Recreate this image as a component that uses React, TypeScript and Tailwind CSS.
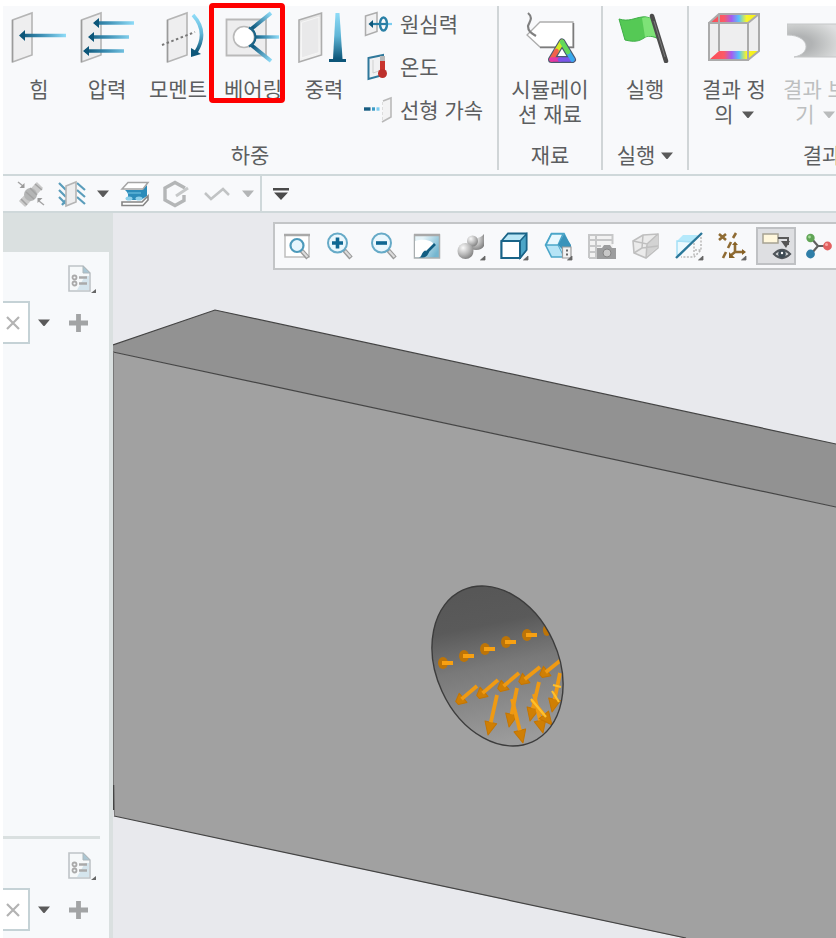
import type { ReactNode } from "react";

const labelText = "text-[21px] leading-[25px] text-[#5c5e60]";

function Caret({ className = "text-[#5a5a5a]" }: { className?: string }) {
  return (
    <svg viewBox="0 0 12 7" className={`h-[7px] w-3 shrink-0 ${className}`} aria-hidden="true">
      <path d="M0 0.5H12L6.5 7H5.5Z" fill="currentColor" />
    </svg>
  );
}

function Corner() {
  return <path d="M28 24V28H23.5Z" fill="#666" stroke="#666" strokeWidth="0.8" />;
}

/* Ribbon icons, 56 x 54 */

function BigIcon({ children }: { children: ReactNode }) {
  return (
    <svg viewBox="0 0 56 54" className="h-[54px] w-[56px] shrink-0" fill="none" aria-hidden="true">
      <defs>
        <linearGradient id="shaft" x1="0" x2="1">
          <stop offset="0" stopColor="#0d5679" />
          <stop offset="0.45" stopColor="#3d8fb4" />
          <stop offset="1" stopColor="#8fdcf8" />
        </linearGradient>
        <linearGradient id="down" x1="0" x2="0" y1="0" y2="1">
          <stop offset="0" stopColor="#8fdcf8" />
          <stop offset="0.5" stopColor="#5fb5d6" />
          <stop offset="1" stopColor="#0d5679" />
        </linearGradient>
        <linearGradient id="plate" x1="0" x2="0" y1="0" y2="1">
          <stop offset="0" stopColor="#e3e3e3" />
          <stop offset="1" stopColor="#f4f4f4" />
        </linearGradient>
      </defs>
      {children}
    </svg>
  );
}

function ForceIcon() {
  return (
    <BigIcon>
      <path d="M1.5 11L21 4V46L1.5 53Z" fill="#eeeeef" stroke="#b5b5b5" strokeWidth="1.6" />
      <path d="M1.5 11V53" stroke="#9b9b9b" strokeWidth="1.4" />
      <path d="M10 24.8H55V28.2H10Z" fill="url(#shaft)" />
      <path d="M8 26.5L14 21V32Z" fill="#0d5679" />
    </BigIcon>
  );
}

function PressureIcon() {
  return (
    <BigIcon>
      <path d="M2.500 11L22 4V46L2.500 53Z" fill="#eeeeef" stroke="#b5b5b5" strokeWidth="1.6" />
      <path d="M2.500 11V53" stroke="#9b9b9b" strokeWidth="1.4" />
      <path d="M16 12.300H55V15.700H16ZM11 26.300H50V29.700H11ZM6 40.300H45V43.700H6Z" fill="url(#shaft)" />
      <path d="M14 14L20 9V19ZM9 28L15 23V33ZM4 42L10 37V47Z" fill="#0d5679" />
    </BigIcon>
  );
}

function MomentIcon() {
  return (
    <BigIcon>
      <path d="M17.500 11L37 4V46L17.500 53Z" fill="#eeeeef" stroke="#b5b5b5" strokeWidth="1.6" />
      <path d="M17.500 11V53" stroke="#9b9b9b" strokeWidth="1.4" />
      <path d="M12 36L45 23" stroke="#777" strokeWidth="1.900" strokeDasharray="2.500 2.500" />
      <path d="M43 6C54 18 54 30 46 43" stroke="url(#down)" strokeWidth="3.600" />
      <path d="M41 39V48L51 45Z" fill="#0d5679" />
    </BigIcon>
  );
}

function BearingIcon() {
  return (
    <BigIcon>
      <defs>
        <linearGradient id="spokeUp" gradientUnits="userSpaceOnUse" x1="24" y1="22" x2="46" y2="4">
          <stop offset="0.2" stopColor="#125c81" />
          <stop offset="1" stopColor="#8fdcf8" />
        </linearGradient>
        <linearGradient id="spokeDown" gradientUnits="userSpaceOnUse" x1="24" y1="34" x2="46" y2="52">
          <stop offset="0.2" stopColor="#125c81" />
          <stop offset="1" stopColor="#8fdcf8" />
        </linearGradient>
      </defs>
      <path d="M1.500 10.500H41V46.500H1.500Z" fill="#ededee" stroke="#b9b9b9" strokeWidth="1.8" />
      <path d="M25 21L46 4" stroke="url(#spokeUp)" strokeWidth="3.800" />
      <path d="M25 35L46 52" stroke="url(#spokeDown)" strokeWidth="3.800" />
      <path d="M28 26.300H54V29.700H28Z" fill="url(#shaft)" />
      <circle cx="19" cy="28" r="10.500" fill="#fff" stroke="#b9b9b9" strokeWidth="1.6" />
      <path d="M24 18.500Q30.500 22 30.500 28T24 37.500" stroke="#1c6588" strokeWidth="2.200" />
    </BigIcon>
  );
}

function GravityIcon() {
  return (
    <BigIcon>
      <path d="M3 11L25.500 4V46L3 53Z" fill="url(#plate)" stroke="#adadad" strokeWidth="1.600" />
      <path d="M5.500 13.500L23 8V43.500L5.500 49Z" fill="#e9e9ea" stroke="#f6f6f6" />
      <path d="M39.500 4H43.500L46.500 50H37Z" fill="url(#down)" />
      <path d="M33 50H50V53H33Z" fill="#0d5679" />
    </BigIcon>
  );
}

function MaterialIcon() {
  return (
    <BigIcon>
      <path d="M18 13H51V38H18L5 26Z" fill="#fff" stroke="#adadad" strokeWidth="1.300" />
      <path d="M51.500 14V38.500H18" stroke="#7c7c7c" strokeWidth="1.500" />
      <path d="M6 4C12 9 7 13 6 17C6 22 9 24 14 27" stroke="#808080" strokeWidth="2.200" />
      <path d="M40 33L50.500 50.500H29.500Z" fill="#fff" stroke="#4a5a70" strokeWidth="7" strokeLinejoin="round" />
      <g strokeWidth="4.600" strokeLinecap="round">
        <path d="M40 33L34.500 42" stroke="#d4ec25" />
        <path d="M34.500 42L29.500 50.500" stroke="#f2604a" />
        <path d="M29.500 50.500H38" stroke="#e437a7" />
        <path d="M38 50.500H50.500" stroke="#7a57ea" />
        <path d="M50.500 50.500L46 43" stroke="#38a9ed" />
        <path d="M46 43L40 33" stroke="#62d95a" />
      </g>
    </BigIcon>
  );
}

function FlagIcon() {
  return (
    <BigIcon>
      <path d="M2 10C12 13 17 9 25 8C29 7 32 9 36 10L42 30C35 27 31 26 27 29C20 34 13 32 8 31Z" fill="#55c955" stroke="#3fae47" strokeWidth="1" />
      <path d="M25 9C29 7 33 9 36 10L42 29C35 26 31 27 28 28Z" fill="#7ee277" />
      <path d="M35 7L49 52" stroke="#4c4c4c" strokeWidth="4.500" strokeLinecap="round" />
      <path d="M37 12L48 48" stroke="#7b7b7b" strokeWidth="1" />
    </BigIcon>
  );
}

function ResultCubeIcon() {
  return (
    <BigIcon>
      <defs>
        <linearGradient id="spectrum" x1="0" x2="1">
          <stop offset="0" stopColor="#fb4b55" />
          <stop offset="0.3" stopColor="#fb5a66" />
          <stop offset="0.45" stopColor="#a55cf0" />
          <stop offset="0.6" stopColor="#55c4fb" />
          <stop offset="0.75" stopColor="#f8f52a" />
          <stop offset="1" stopColor="#f6ee10" />
        </linearGradient>
      </defs>
      <path d="M3 14L13 5H53V43L42 51H3Z" fill="#eeeeef" />
      <path d="M3 14L13 5H53L42 14Z" fill="url(#spectrum)" />
      <path d="M3 51L13 42H53L42 51Z" fill="url(#spectrum)" />
      <path d="M13 5V42M3 14H42V51H3ZM3 14L13 5H53V42L42 51M42 14L53 5" stroke="#ababab" strokeWidth="2" />
    </BigIcon>
  );
}

function ResultViewIcon() {
  return (
    <BigIcon>
      <defs>
        <radialGradient id="stress" cx="0.200" cy="0.600" r="0.800">
          <stop offset="0.300" stopColor="#b1b3b4" />
          <stop offset="0.700" stopColor="#cbcdcd" />
          <stop offset="1" stopColor="#dedfe0" />
        </radialGradient>
      </defs>
      <path d="M0 15H56V48H7C25 45 23 26 0 26Z" fill="url(#stress)" stroke="#c5c7c8" />
    </BigIcon>
  );
}

/* Small icons, 28 x 28 */

function Icon28({ children, className = "" }: { children: ReactNode; className?: string }) {
  return (
    <svg viewBox="0 0 28 28" className={`size-7 shrink-0 overflow-visible ${className}`} fill="none" aria-hidden="true">
      {children}
    </svg>
  );
}

function CentrifugalIcon() {
  return (
    <Icon28>
      <path d="M1.500 6L13 2.500V21.500L1.500 25.500Z" fill="#f1f1f2" stroke="#adadad" strokeWidth="1.500" />
      <path d="M6 14H24" stroke="#287da4" strokeWidth="2.200" />
      <path d="M24 14H28" stroke="#7bcdf0" strokeWidth="2.200" />
      <path d="M4.500 14L9 10V18Z" fill="#0d5679" />
      <ellipse cx="19.500" cy="14" rx="3.500" ry="6.500" stroke="#2a80a6" strokeWidth="2.400" />
    </Icon28>
  );
}

function TemperatureIcon() {
  return (
    <Icon28>
      <path d="M4.500 5L19 2V22L4.500 26Z" fill="#f1f1f2" stroke="#2f789b" strokeWidth="2" />
      <path d="M9 7V20L15 18" stroke="#cfcfcf" />
      <path d="M16 3H21V17H16Z" fill="#b9b9b9" />
      <path d="M16 8H21V18H16Z" fill="#c9352e" />
      <circle cx="18.500" cy="20.500" r="4.500" fill="#bd302c" />
    </Icon28>
  );
}

function LinearAccelIcon() {
  return (
    <Icon28>
      <path d="M0 13H6.500" stroke="#175d82" strokeWidth="3.400" />
      <path d="M8 13H11" stroke="#3d9cc6" strokeWidth="3.400" />
      <path d="M12.500 13H15.500" stroke="#7bcdf0" strokeWidth="3.400" />
      <path d="M19 5L27 2V21L18 26" fill="#f3f3f4" stroke="#b9b9b9" strokeWidth="1.600" />
      <path d="M18.500 6V25" stroke="#ddd" strokeDasharray="3 2" />
    </Icon28>
  );
}

/* Canvas toolbar icons */

const handle = <path d="M18 18L25 26" stroke="#9a9a9a" strokeWidth="4.500" />;
const handleCore = <path d="M19 19L24.500 25" stroke="#dcdcdc" strokeWidth="2" />;

function RefitIcon() {
  return (
    <Icon28>
      <path d="M2 3H26V25H2Z" fill="#fff" stroke="#bfbfbf" strokeWidth="1.500" />
      <path d="M1 3H27" stroke="#a9a9a9" strokeWidth="2.500" />
      {handle}
      {handleCore}
      <circle cx="14" cy="13.500" r="6.500" fill="#e7f6fd" stroke="#4d9abb" strokeWidth="2.200" />
    </Icon28>
  );
}

function ZoomIcon({ plus }: { plus?: boolean }) {
  return (
    <Icon28>
      {handle}
      {handleCore}
      <circle cx="11.500" cy="11" r="9.500" fill="#eaf7fd" stroke="#66aac7" strokeWidth="2" />
      <path d={plus ? "M6 11H17M11.500 5.500V16.500" : "M6 11H17"} stroke="#0f6792" strokeWidth="3.600" />
    </Icon28>
  );
}

function RepaintIcon() {
  return (
    <Icon28>
      <defs>
        <linearGradient id="canvasFill" x1="0" x2="1" y1="0" y2="0.600">
          <stop offset="0.300" stopColor="#e6f4f9" />
          <stop offset="1" stopColor="#74b6d0" />
        </linearGradient>
      </defs>
      <path d="M1.500 3H26.500V26H1.500Z" fill="url(#canvasFill)" stroke="#a9aeb0" strokeWidth="1.500" />
      <path d="M2 9C12 6 20 9 21 13L8 25H2Z" fill="#fff" />
      <path d="M1 3H27" stroke="#a9a9a9" strokeWidth="2.500" />
      <path d="M22 12L14 20" stroke="#115d82" strokeWidth="2.600" />
      <path d="M6 25.500C9 25 8 21 12 18.500L16 20C15 23 13 25.500 10 25.500Z" fill="#115d82" />
    </Icon28>
  );
}

function RenderIcon() {
  return (
    <Icon28>
      <defs>
        <radialGradient id="ball" cx="0.350" cy="0.300" r="0.800">
          <stop offset="0" stopColor="#fafafa" />
          <stop offset="0.500" stopColor="#bdbdbd" />
          <stop offset="1" stopColor="#777" />
        </radialGradient>
      </defs>
      <path d="M15 6C19 7 24 6 27 2V14C25 18 19 19 14 17Z" fill="url(#ball)" />
      <circle cx="15.500" cy="9" r="5.500" fill="url(#ball)" />
      <circle cx="8.500" cy="19" r="8" fill="url(#ball)" />
      <Corner />
    </Icon28>
  );
}

function CubeIcon() {
  return (
    <Icon28>
      <path d="M1.500 9L8 1.500H26.500V18L20 26H1.500Z" fill="#b9e6f6" stroke="#1a6488" strokeWidth="1.800" />
      <path d="M20 9L26.500 2V18L20 26Z" fill="#4ca5c7" stroke="#1a6488" strokeWidth="1.500" />
      <path d="M1.500 9H20V26H1.500Z" fill="#fff" stroke="#1a6488" strokeWidth="2" />
      <Corner />
    </Icon28>
  );
}

function SavedViewIcon() {
  return (
    <Icon28>
      <path d="M7.500 1.500H20L26 14L21 25H7.500L1.500 13Z" fill="#b5e4f6" stroke="#4ba6c9" strokeWidth="1.600" />
      <path d="M7.500 2H19L14 13H2Z" fill="#e8f8fe" stroke="#4ba6c9" strokeWidth="1.500" />
      <path d="M20 2L27 13V17H18L14 13Z" fill="#3a93ba" />
      <path d="M14 13L20 25" stroke="#4ba6c9" />
      <path d="M18.500 15H27V26H18.500Z" fill="#f2f2f2" stroke="#9b9b9b" strokeWidth="1.200" />
      <path d="M22 18.500H24M22 22.500H24" stroke="#666" strokeWidth="2" />
      <Corner />
    </Icon28>
  );
}

function ViewManagerIcon() {
  return (
    <Icon28>
      <path d="M1 2H25V26H1Z" fill="#f2f2f2" />
      <path d="M0 3H25M1 8H25M1 14H13M1 20H10M1 26H9M1 2V26M8 2V26M24.500 2V12" stroke="#c6c7c8" strokeWidth="2" />
      <path d="M9 16H14L16 13H22L24 16H28V27H9Z" fill="#9c9d9e" />
      <circle cx="19" cy="21" r="4" fill="#c8c8c8" stroke="#858585" />
    </Icon28>
  );
}

function PerspectiveIcon() {
  return (
    <Icon28>
      <path d="M2 9L12 3L27 2V16L15 26L3 21Z" fill="#ebebeb" stroke="#bfbfbf" strokeWidth="1.600" />
      <path d="M16 12L27 3V15L15 25Z" fill="#d3d3d3" />
      <path d="M2 9L16 12L27 2M16 12L15 26M12 3L11 16L3 21M11 16L27 14" stroke="#bfbfbf" strokeWidth="1.500" />
    </Icon28>
  );
}

function SectionIcon() {
  return (
    <Icon28>
      <path d="M2 9L8 3H23L17 10H2Z" fill="#b5e9fb" />
      <path d="M2 9V23H5L17 10Z" fill="#ebf9fe" stroke="#a5e0f6" strokeWidth="1.500" />
      <path d="M26 5V18L19 25H6M19 11V25M20 18H26" stroke="#b9b9b9" strokeWidth="1.500" strokeDasharray="2 1.500" />
      <path d="M1 26L27 1" stroke="#2a7799" strokeWidth="2.400" />
      <Corner />
    </Icon28>
  );
}

function DatumIcon() {
  return (
    <Icon28>
      <path d="M1 2L8 8M8 2L1 8M18 1L15 6M13 10L10 16M8 20L5 26M17 12V20M17 20H26M17 20L12 24" stroke="#8f6b33" strokeWidth="2.600" />
      <path d="M14 13H20L17 9.500ZM24 17V23L28 20ZM11 20V26H17Z" fill="#876125" />
      <Corner />
    </Icon28>
  );
}

function AnnotationIcon() {
  return (
    <Icon28>
      <path d="M1 2H16V11H1Z" fill="#fff7dc" stroke="#a7a292" strokeWidth="1.500" />
      <path d="M16 6H26V13" stroke="#5a5a5a" strokeWidth="2" />
      <path d="M19 9H28L24 16Z" fill="#555" />
      <path d="M12 22Q20 14 28 22Q20 30 12 22Z" fill="#cfd2d4" stroke="#50555a" strokeWidth="2.200" />
      <circle cx="20" cy="22" r="3.800" fill="#3e4b54" />
      <circle cx="20" cy="21" r="1.200" fill="#fff" />
    </Icon28>
  );
}

function SpinCenterIcon() {
  return (
    <Icon28>
      <path d="M6 6L13 14L6 22M13 14H22" stroke="#606060" strokeWidth="2.200" />
      <circle cx="5.500" cy="6" r="4.200" fill="#61a556" />
      <circle cx="5.500" cy="22" r="4.400" fill="#2f7ea8" />
      <circle cx="22.500" cy="14" r="4.400" fill="#e26161" />
      <circle cx="4.500" cy="5" r="1.400" fill="#a7dc9c" />
      <circle cx="21.500" cy="12.500" r="1.500" fill="#f9a9a5" />
    </Icon28>
  );
}

/* Quick access icons */

function BoltIcon() {
  return (
    <Icon28>
      <path d="M5 24L23 5" stroke="#cacaca" strokeWidth="8.500" />
      <circle cx="13.500" cy="14.500" r="6.500" fill="#b4b5b5" />
      <path d="M4 19L10 25M18 4L25 10M9 12L17 19M13 8L20 15" stroke="#a3a3a3" strokeWidth="1.600" />
      <path d="M1 2L6 6M27 25L22 21" stroke="#a5a5a5" strokeWidth="1.500" />
      <path d="M7.500 3V8H2.500ZM20.500 23V18H25.500Z" fill="#9a9a9a" />
    </Icon28>
  );
}

function ConstraintIcon() {
  return (
    <Icon28>
      <path d="M1 3L8 10M1 10L8 17M1 17L8 24M19 3L27 10M19 10L27 17M19 17L27 24M4 25L8 20" stroke="#5a9dbb" strokeWidth="2.200" />
      <path d="M8 6L18 2V22L8 26Z" fill="#ededee" stroke="#b5b5b5" strokeWidth="1.600" />
    </Icon28>
  );
}

function ContactIcon() {
  return (
    <Icon28>
      <path d="M4 10H21L26 5V16L20 20H5C8 17 8 13 4 10Z" fill="#2c8cba" />
      <path d="M1 9L7 2.500H27L22 9Z" fill="#fff" stroke="#a5a5a5" strokeWidth="1.500" />
      <path d="M7 13H20" stroke="#56aed3" strokeWidth="1.800" />
      <ellipse cx="8" cy="18.500" rx="3.500" ry="2" fill="#8ed0ea" />
      <ellipse cx="18" cy="18.500" rx="3.500" ry="2" fill="#8ed0ea" />
      <path d="M1 25.500V22H21L27 16V20L22 25.500Z" fill="#fff" stroke="#858585" strokeWidth="1.600" />
    </Icon28>
  );
}

function HexIcon() {
  return (
    <Icon28>
      <path d="M23 8L13 2.500L3 8V20L13 25.500L22 20.500V15" stroke="#b4b6b7" strokeWidth="3.400" />
      <path d="M14 16L26 8" stroke="#c6c8c9" strokeWidth="3" />
    </Icon28>
  );
}

function ZigzagIcon() {
  return (
    <Icon28>
      <path d="M2 13L8 19L20 9L26 15" stroke="#c1c3c4" strokeWidth="2.500" />
    </Icon28>
  );
}

/* Ribbon parts */

function RibbonButton({
  icon,
  children,
  className = "",
  disabled,
}: {
  icon: ReactNode;
  children: ReactNode;
  className?: string;
  disabled?: boolean;
}) {
  return (
    <button
      type="button"
      disabled={disabled}
      className={`relative flex shrink-0 flex-col items-center gap-[14px] pt-[3px] whitespace-nowrap disabled:[&_span]:text-[#bdbfc0] ${className}`}
    >
      {icon}
      <span className={labelText}>{children}</span>
    </button>
  );
}

function SmallButton({ icon, children }: { icon: ReactNode; children: ReactNode }) {
  return (
    <button type="button" className="flex h-9 items-center gap-2 whitespace-nowrap">
      {icon}
      <span className={labelText}>{children}</span>
    </button>
  );
}

function Group({ title, children, className = "" }: { title: ReactNode; children: ReactNode; className?: string }) {
  return (
    <section className={`flex h-[164px] shrink-0 flex-col justify-between ${className}`}>
      <div className="flex">{children}</div>
      <h2 className={`flex items-center justify-center gap-[6px] pb-[2px] whitespace-nowrap ${labelText}`}>{title}</h2>
    </section>
  );
}

const divider = "border-r-2 border-[#d0d5d7]";

function Ribbon() {
  return (
    <header className="flex h-[170px] border-b-2 border-[#cfd8da] bg-[#f8f9fb]">
      <Group title="하중" className={`w-[496px] ${divider}`}>
        <RibbonButton icon={<ForceIcon />} className="w-[72px]">힘</RibbonButton>
        <RibbonButton icon={<PressureIcon />} className="w-16">압력</RibbonButton>
        <RibbonButton icon={<MomentIcon />} className="w-[78px]">모멘트</RibbonButton>
        <RibbonButton icon={<BearingIcon />} className="w-[72px]">
          베어링
          <i className="absolute -top-[3px] -left-2 h-[100px] w-[76px] rounded-sm border-[5px] border-[#fe0000]" />
        </RibbonButton>
        <RibbonButton icon={<GravityIcon />} className="w-[70px]">중력</RibbonButton>
        <div className="flex flex-col gap-[7px] pl-[5px]">
          <SmallButton icon={<CentrifugalIcon />}>원심력</SmallButton>
          <SmallButton icon={<TemperatureIcon />}>온도</SmallButton>
          <SmallButton icon={<LinearAccelIcon />}>선형 가속</SmallButton>
        </div>
      </Group>
      <Group title="재료" className={`w-[104px] ${divider}`}>
        <RibbonButton icon={<MaterialIcon />} className="w-full">
          시뮬레이
          <br />션 재료
        </RibbonButton>
      </Group>
      <Group title={<>실행 <Caret /></>} className={`w-[86px] ${divider}`}>
        <RibbonButton icon={<FlagIcon />} className="w-full">실행</RibbonButton>
      </Group>
      <Group title="결과" className="w-[266px]">
        <RibbonButton icon={<ResultCubeIcon />} className="w-[90px]">
          결과 정
          <br />
          <span className="inline-flex items-center gap-2">의 <Caret /></span>
        </RibbonButton>
        <RibbonButton icon={<ResultViewIcon />} className="w-[72px]" disabled>
          결과 보
          <br />
          <span className="inline-flex items-center gap-2">기 <Caret className="text-[#b9bbbc]" /></span>
        </RibbonButton>
      </Group>
    </header>
  );
}

function QuickBar() {
  return (
    <nav aria-label="빠른 실행" className="flex h-[37px] items-center border-b-2 border-[#cfd8da] bg-[#f8f9fb]">
      <button type="button" aria-label="볼트" className="ml-[14px]"><BoltIcon /></button>
      <button type="button" aria-label="구속" className="ml-[13px] flex items-center gap-[11px]"><ConstraintIcon /><Caret /></button>
      <button type="button" aria-label="접촉" className="ml-3"><ContactIcon /></button>
      <button type="button" aria-label="형상" className="ml-[13px]"><HexIcon /></button>
      <button type="button" aria-label="곡선" className="ml-[13px] flex items-center gap-[11px]"><ZigzagIcon /><Caret className="text-[#b3b5b6]" /></button>
      <button type="button" aria-label="사용자 정의" className="ml-[6px] flex h-full items-center border-l-2 border-[#cfd8da] pl-[11px]">
        <svg viewBox="0 0 16 12" className="h-3 w-4" aria-hidden="true">
          <path d="M0 0H16V2.500H0ZM1 4.500H15L8 12Z" fill="#4a4a4a" />
        </svg>
      </button>
    </nav>
  );
}

function TreeTools({ id }: { id: string }) {
  return (
    <div className="flex flex-col gap-[6px] pt-3">
      <button type="button" aria-label="설정" className="ml-[65px] w-[30px]">
        <svg viewBox="0 0 30 31" className="h-[31px] w-[30px]" fill="none" aria-hidden="true">
          <path d="M1 2H15L22 9V27H1Z" fill="#f6f9fa" stroke="#bfc4c7" strokeWidth="1.600" />
          <path d="M15 2V9H22Z" fill="#aac6d3" stroke="#aeb8bc" />
          <path d="M17 12H21V26H9Z" fill="#d5e5ed" />
          <path d="M11 13.500H19M11 19.500H19" stroke="#aaa" strokeWidth="2.400" />
          <circle cx="6.500" cy="13.500" r="2" stroke="#aaa" strokeWidth="1.800" />
          <circle cx="6.500" cy="19.500" r="2" stroke="#aaa" strokeWidth="1.800" />
          <path d="M28 25V29H23Z" fill="#666" />
        </svg>
      </button>
      <div className="flex items-center">
        <div className="flex h-[43px] w-[27px] items-center border-2 border-l-0 border-[#c5d2d6] bg-white pr-2">
          <input id={id} aria-label="검색" className="w-0 min-w-0 flex-1 outline-none" />
          <button type="button" aria-label="지우기">
            <svg viewBox="0 0 14 14" className="size-[14px]" aria-hidden="true">
              <path d="M1 1L13 13M13 1L1 13" stroke="#b3b3b3" strokeWidth="2.200" />
            </svg>
          </button>
        </div>
        <button type="button" aria-label="옵션" className="ml-2"><Caret /></button>
        <button type="button" aria-label="추가" className="ml-[18px]">
          <svg viewBox="0 0 20 20" className="size-5" aria-hidden="true">
            <path d="M10.500 1V19M1 10H20" stroke="#a2a4a5" strokeWidth="4.800" />
          </svg>
        </button>
      </div>
    </div>
  );
}

function Sidebar() {
  return (
    <aside className="flex w-[110px] shrink-0 flex-col border-r-4 border-[#dae0e0] bg-[#f7f9fb]">
      <div className="h-[39px] bg-[#dae0e0]" />
      <div className="flex-1"><TreeTools id="model-filter" /></div>
      <div className="pb-[7px]">
        <div className="mr-[9px] h-[3px] bg-[#dae0e0]" />
        <TreeTools id="layer-filter" />
      </div>
    </aside>
  );
}

/* 3D model */

type Arrow = [number, number, number, number];

const stubs: [number, number][] = [[443, 663], [464, 656], [485, 649], [506, 642], [527, 635]];

const obliqueArrows: Arrow[] = [
  [477, 686, 457, 703],
  [498, 680, 478, 697],
  [519, 673, 499, 690],
  [540, 667, 520, 683],
  [561, 660, 541, 676],
];

const radialArrows: Arrow[] = [
  [497, 695, 488, 735],
  [517, 688, 509, 727],
  [512, 699, 523, 743],
  [539, 682, 530, 721],
  [534, 694, 543, 733],
  [560, 673, 552, 712],
  [532, 700, 552, 725],
];

function LoadArrow({ points: [x1, y1, x2, y2], blunt }: { points: Arrow; blunt?: boolean }) {
  const length = Math.hypot(x2 - x1, y2 - y1);
  const angle = (Math.atan2(y2 - y1, x2 - x1) * 180) / Math.PI;
  const head = blunt ? 8 : 13;
  return (
    <g transform={`translate(${x1} ${y1}) rotate(${angle})`}>
      <path d={`M${length - head} -6L${length} ${blunt ? -2 : 0}V${blunt ? 2 : 0}L${length - head} 6Z`} fill="#cf7f05" stroke="#c57500" strokeLinejoin="round" />
      <path d={`M0 0H${length - (blunt ? 6 : head)}`} stroke="#f09a12" strokeWidth="3.800" />
    </g>
  );
}

function Bore(props: { fill: string; stroke?: string; strokeWidth?: string }) {
  return <ellipse cx="497.500" cy="666" rx="83.500" ry="61" transform="rotate(65.300 497.500 666)" {...props} />;
}

function Model() {
  return (
    <svg viewBox="113 213 723 725" preserveAspectRatio="xMinYMin slice" className="absolute inset-0 h-full w-full" role="img" aria-label="구멍이 있는 블록">
      <defs>
        <linearGradient id="boreShade" gradientUnits="userSpaceOnUse" x1="480" y1="590" x2="510" y2="740">
          <stop offset="0" stopColor="#575757" />
          <stop offset="0.230" stopColor="#5a5a5a" />
          <stop offset="0.500" stopColor="#797979" />
          <stop offset="1" stopColor="#9b9b9b" />
        </linearGradient>
        <clipPath id="boreClip">
          <ellipse cx="497.500" cy="666" rx="83.500" ry="61" transform="rotate(65.300 497.500 666)" />
        </clipPath>
      </defs>
      <path d="M113 345L215 310L836 444V507L113 352Z" fill="#929292" />
      <path d="M113 352L836 507V938H684L114 816Z" fill="#a1a1a1" />
      <path d="M113 345L215 310L836 444M113 352L836 507M114 816L686 938" fill="none" stroke="#444" strokeWidth="1.200" />
      <path d="M113.500 352V785L114.500 816" fill="none" stroke="#777" />
      <path d="M113.500 785V810" stroke="#444" strokeWidth="1.500" />
      <g clipPath="url(#boreClip)">
        <rect x="425" y="580" width="145" height="172" fill="url(#boreShade)" />
        {stubs.map(([x, y]) => (
          <g key={x}>
            <ellipse cx={x} cy={y} rx="5" ry="6" fill="#bd7407" />
            <path d={`M${x - 1} ${y}H${x + 10}`} stroke="#f7a012" strokeWidth="3.800" />
          </g>
        ))}
        <ellipse cx="547" cy="630" rx="4" ry="6" fill="#bd7407" />
        {obliqueArrows.map((a) => (
          <LoadArrow key={a.join()} points={a} blunt />
        ))}
        {radialArrows.map((a) => (
          <LoadArrow key={a.join()} points={a} />
        ))}
        <path d="M531 699L546 717M552 691L559 702M553 685L561 687" stroke="#ffc02b" strokeWidth="2.200" />
      </g>
      <Bore fill="none" stroke="#3c3c3c" strokeWidth="1.400" />
    </svg>
  );
}

const viewTools: { name: string; icon: ReactNode; active?: boolean }[] = [
  { name: "다시 맞춤", icon: <RefitIcon /> },
  { name: "확대", icon: <ZoomIcon plus /> },
  { name: "축소", icon: <ZoomIcon /> },
  { name: "다시 그리기", icon: <RepaintIcon /> },
  { name: "렌더링", icon: <RenderIcon /> },
  { name: "표시 스타일", icon: <CubeIcon /> },
  { name: "저장된 방향", icon: <SavedViewIcon /> },
  { name: "뷰 관리자", icon: <ViewManagerIcon /> },
  { name: "원근", icon: <PerspectiveIcon /> },
  { name: "단면", icon: <SectionIcon /> },
  { name: "데이텀 표시", icon: <DatumIcon /> },
  { name: "주석 표시", icon: <AnnotationIcon />, active: true },
  { name: "회전 중심", icon: <SpinCenterIcon /> },
];

function Canvas() {
  return (
    <main className="relative min-w-0 flex-1 overflow-hidden bg-[#e8e9ed]">
      <Model />
      <div className="absolute top-[9px] left-[160px] grid h-12 w-[570px] grid-cols-13 items-center border-2 border-[#c3c5c7] bg-[#f8f9fb]">
        {viewTools.map((tool) => (
          <button
            key={tool.name}
            type="button"
            aria-label={tool.name}
            className={`mx-auto flex h-[38px] w-10 items-center justify-center ${tool.active ? "border-2 border-[#bfc1c4] bg-[#dedfe2]" : ""}`}
          >
            {tool.icon}
          </button>
        ))}
      </div>
    </main>
  );
}

export default function App() {
  return (
    <div className="flex min-h-screen flex-col overflow-hidden bg-white pt-[6px] pl-[3px] font-['Liberation_Sans','Noto_Sans_CJK_KR',sans-serif]">
      <Ribbon />
      <QuickBar />
      <div className="flex flex-1">
        <Sidebar />
        <Canvas />
      </div>
    </div>
  );
}
